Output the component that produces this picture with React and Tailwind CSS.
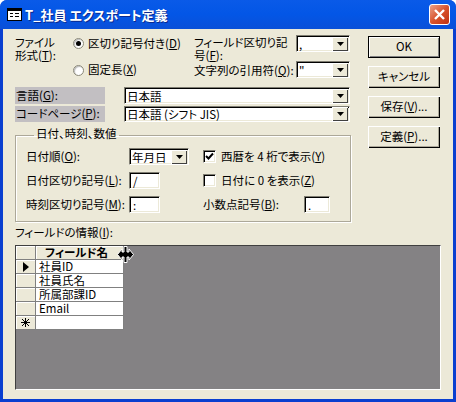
import React from "react";

const sunken = "border border-t-[#7f7d72] border-l-[#7f7d72] border-r-white border-b-white shadow-[inset_1px_1px_0_#000,inset_-1px_-1px_0_#ece9d8]";

function DropArrow() {
  return (
    <span className="flex h-[14px] w-[16px] shrink-0 items-center justify-center bg-[#ece9d8] shadow-[inset_1px_1px_0_#fff,inset_-1px_-1px_0_#404040]">
      <svg width="7" height="4" viewBox="0 0 7 4">
        <path d="M0 0h7L3.5 4z" fill="#000" />
      </svg>
    </span>
  );
}

function Combo({ className, children }) {
  return (
    <div className={`flex items-center justify-between bg-white pl-[2px] pr-[1px] ${sunken} ${className}`}>
      <span className="whitespace-nowrap leading-[14px]">{children}</span>
      <DropArrow />
    </div>
  );
}

function Field({ className, children }) {
  return (
    <div className={`flex items-center bg-white pl-[3px] leading-[14px] ${sunken} ${className}`}>{children}</div>
  );
}

function Radio({ checked }) {
  return (
    <span className="flex h-[11px] w-[11px] shrink-0 items-center justify-center rounded-full border border-[#8a8878] bg-white shadow-[inset_1px_1px_1px_#bbb]">
      {checked && <span className="h-[5px] w-[5px] rounded-full bg-black" />}
    </span>
  );
}

function Check({ checked }) {
  return (
    <span className={`flex h-[13px] w-[13px] shrink-0 items-center justify-center bg-white ${sunken}`}>
      {checked && (
        <svg width="9" height="9" viewBox="0 0 9 9">
          <path d="M1 4l2.5 2.5L8 1.5" fill="none" stroke="#000" strokeWidth="2" />
        </svg>
      )}
    </span>
  );
}

function Btn({ children, isDefault }) {
  return (
    <button
      className={`flex h-[22px] w-[72px] items-center justify-center bg-[#ece9d8] ${
        isDefault
          ? "border border-black shadow-[inset_1px_1px_0_#fff,inset_-1px_-1px_0_#808080]"
          : "shadow-[inset_1px_1px_0_#fff,inset_-1px_-1px_0_#000,inset_-2px_-2px_0_#aca899]"
      }`}
    >
      {children}
    </button>
  );
}

function SelectorCell({ children }) {
  return (
    <div className="flex h-[14px] w-[20px] items-center justify-center border-r border-b border-[#808080] bg-[#ece9d8] shadow-[inset_1px_1px_0_#fff]">
      {children}
    </div>
  );
}

function Row({ marker, children }) {
  return (
    <div className="flex">
      <SelectorCell>{marker}</SelectorCell>
      <div className="flex h-[14px] w-[88px] items-center border-r border-b border-[#808080] bg-white pl-[3px] leading-[13px]">
        {children}
      </div>
    </div>
  );
}

export default function App() {
  return (
    <div className="flex h-[402px] w-[456px] flex-col overflow-hidden rounded-t-[7px] bg-[#0a3fd0] text-[11.5px] text-black [font-family:'Noto_Sans_CJK_JP','Noto_Sans',sans-serif] [font-feature-settings:'palt']">
      {/* Title bar */}
      <div className="flex h-[29px] shrink-0 items-center bg-gradient-to-b from-[#0a5ae8] via-[#0356e6] to-[#0a50d8] pl-[7px] pr-[6px]">
        <svg width="15" height="13" viewBox="0 0 15 13" className="shrink-0">
          <rect x="0.5" y="0.5" width="14" height="12" fill="#fff" stroke="#000" />
          <rect x="1" y="1" width="13" height="2" fill="#000" />
          <path d="M3 5h3v1H3zM3 8h3v1H3zM8 5h4v1H8zM8 8h4v1H8z" fill="#000" />
        </svg>
        <span className="ml-[3px] text-[13px] font-bold leading-[16px] text-white [text-shadow:1px_1px_0_#0a2a90]">
          T_社員 エクスポート定義
        </span>
        <button className="ml-auto flex h-[21px] w-[21px] items-center justify-center rounded-[3px] border border-white bg-gradient-to-br from-[#e8a088] via-[#d8532c] to-[#c03010]">
          <svg width="13" height="13" viewBox="0 0 13 13">
            <path d="M2 2l9 9M11 2l-9 9" stroke="#fff" strokeWidth="2.4" />
          </svg>
        </button>
      </div>

      {/* Dialog body */}
      <div className="mx-[3px] mb-[3px] flex min-h-0 flex-1 flex-col bg-[#ece9d8] pl-[12px] pr-[13px] pt-[6px]">
        <div className="flex justify-between">
          <div className="w-[335px]">
            {/* Format */}
            <div className="grid grid-cols-[58px_121px_102px_54px] grid-rows-[17px_17px] gap-y-[9px]">
              <div className="row-span-2 pt-[1px] leading-[13px]">
                ファイル<br />形式(<u>T</u>):
              </div>
              <div className="flex items-center gap-[4px]">
                <Radio checked />
                <span>区切り記号付き(<u>D</u>)</span>
              </div>
              <div className="h-[26px] whitespace-nowrap pt-[1px] leading-[13px]">
                フィールド区切り記<br />号(<u>F</u>):
              </div>
              <Combo className="h-[17px]">,</Combo>
              <div className="flex items-center gap-[4px] pt-[1px]">
                <Radio />
                <span>固定長(<u>X</u>)</span>
              </div>
              <div className="flex items-center whitespace-nowrap pt-[3px]">文字列の引用符(<u>Q</u>):</div>
              <Combo className="h-[17px]">"</Combo>
            </div>

            {/* Language */}
            <div className="mt-[9px] flex flex-col gap-[2px]">
              <div className="flex items-center justify-between">
                <div className="flex h-[17px] w-[90px] items-center bg-[#c2bfc2] pl-[1px]">言語(<u>G</u>):</div>
                <Combo className="h-[17px] w-[226px]">日本語</Combo>
              </div>
              <div className="flex items-center justify-between">
                <div className="flex h-[16px] w-[90px] items-center bg-[#c2bfc2] pl-[1px]">コードページ(<u>P</u>):</div>
                <Combo className="h-[16px] w-[226px]">日本語 (シフト JIS)</Combo>
              </div>
            </div>
          </div>

          <div className="flex w-[72px] flex-col gap-[8px] pt-[1px]">
            <Btn isDefault>OK</Btn>
            <Btn>キャンセル</Btn>
            <Btn>保存(<u>V</u>)...</Btn>
            <Btn>定義(<u>P</u>)...</Btn>
          </div>
        </div>

        {/* Date, time, numbers */}
        <fieldset className="mt-[-22px] h-[96px] w-[336px] border border-[#aca899] pl-[10px] shadow-[1px_1px_0_#fff,inset_1px_1px_0_#fff]">
          <legend className="ml-[8px] px-[2px] pb-[4px] leading-[14px]">日付、時刻、数値</legend>
          <div className="mt-[4px] grid grid-cols-[103px_74px_1fr] grid-rows-[17px_17px_17px] items-center gap-y-[7px]">
            <div>日付順(<u>O</u>):</div>
            <Combo className="h-[17px] w-[60px]">年月日</Combo>
            <div className="flex items-center gap-[5px]">
              <Check checked />
              <span>西暦を 4 桁で表示(<u>Y</u>)</span>
            </div>
            <div className="whitespace-nowrap">日付区切り記号(<u>L</u>):</div>
            <Field className="h-[17px] w-[31px]">/</Field>
            <div className="flex items-center gap-[5px]">
              <Check />
              <span>日付に 0 を表示(<u>Z</u>)</span>
            </div>
            <div className="whitespace-nowrap">時刻区切り記号(<u>M</u>):</div>
            <Field className="h-[17px] w-[31px]">:</Field>
            <div className="flex items-center justify-between pr-[20px]">
              <span>小数点記号(<u>B</u>):</span>
              <Field className="h-[17px] w-[26px]">.</Field>
            </div>
          </div>
        </fieldset>

        <div className="mt-[3px] leading-[14px]">フィールドの情報(<u>I</u>):</div>

        {/* Field grid */}
        <div className="relative mt-[6px] h-[145px] w-[426px] border border-t-[#404040] border-l-[#404040] border-r-white border-b-white bg-[#848284]">
          <div className="flex">
            <SelectorCell />
            <div className="flex h-[14px] w-[88px] items-center border-r border-b border-[#808080] bg-[#ece9d8] pl-[9px] font-bold leading-[13px] shadow-[inset_1px_1px_0_#fff]">
              フィールド名
            </div>
          </div>
          <Row
            marker={
              <svg width="6" height="10" viewBox="0 0 6 10">
                <path d="M0 0l6 5-6 5z" fill="#000" />
              </svg>
            }
          >
            社員ID
          </Row>
          <Row>社員氏名</Row>
          <Row>所属部課ID</Row>
          <Row>Email</Row>
          <Row
            marker={
              <svg width="9" height="9" viewBox="0 0 9 9">
                <path d="M4.5 0v9M0 4.5h9M1 1l7 7M8 1l-7 7" stroke="#000" strokeWidth="1" />
              </svg>
            }
          />

          {/* column resize cursor */}
          <svg width="17" height="17" viewBox="0 0 17 17" className="absolute left-[101px] top-0">
            <path
              d="M7 0.5h3v5.5h2v-3l4.5 5.5-4.5 5.5v-3h-2v5.5h-3v-5.5h-2v3L0.5 8.500l4.500-5.500v3h2z"
              fill="#000"
              stroke="#fff"
              strokeWidth="1"
            />
          </svg>
        </div>
      </div>
    </div>
  );
}
